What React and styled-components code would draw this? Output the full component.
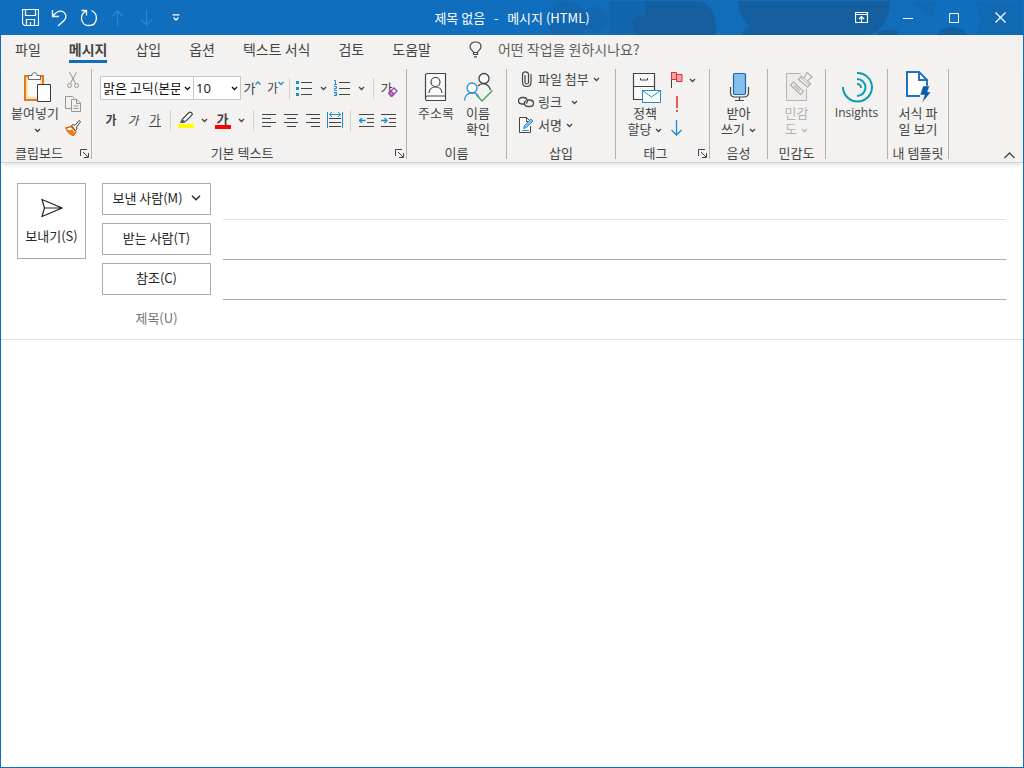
import React from 'react';
import styled, { createGlobalStyle, ThemeProvider } from 'styled-components';

const theme = {
  colors: {
    brand: '#106ebe',
    brandDark: '#155fa0',
    ribbon: '#f3f2f1',
    ink: '#3b3a39',
    text: '#444444',
    line: '#b3b0ad',
    softLine: '#e1e1e1',
    blue: '#1e8bcd',
    disabled: '#b5b3b1',
  },
  fonts: {
    ui: '"Open Sans", "Noto Sans CJK KR", sans-serif',
    korean: '"Noto Sans CJK KR", "Noto Sans", sans-serif',
  },
};

const GlobalStyle = createGlobalStyle`
  * {
    box-sizing: border-box;
  }

  html,
  body,
  #root {
    height: 100%;
    margin: 0;
  }

  button,
  input,
  select,
  textarea {
    margin: 0;
    padding: 0;
    border: 0;
    background: none;
    color: inherit;
    font: inherit;
  }

  svg {
    display: block;
    flex: none;
  }
`;

const Window = styled.div`
  display: flex;
  flex-direction: column;
  min-height: 100%;
  border: 1px solid ${props => props.theme.colors.brand};
  border-top: 0;
  background: #ffffff;
  color: ${props => props.theme.colors.text};
  font-family: ${props => props.theme.fonts.korean};
  font-size: 13px;
  line-height: 16px;
`;

/* Title bar */
const TitleBar = styled.header`
  position: relative;
  display: grid;
  grid-template-columns: 1fr auto 1fr;
  align-items: center;
  height: 35px;
  overflow: hidden;
  background: ${props => props.theme.colors.brand};
  color: #ffffff;
`;

const TitleArt = styled.svg`
  position: absolute;
  top: 0;
  right: 0;
`;

const QuickAccess = styled.div`
  display: flex;
  padding-left: 15px;
`;

const QuickButton = styled.button`
  display: flex;
  align-items: center;
  justify-content: center;
  width: 29px;
  height: 35px;
  color: ${props => (props.disabled ? '#2b88d8' : '#ffffff')};
`;

const Title = styled.h1`
  position: relative;
  margin: 0;
  font-size: 13px;
  font-weight: 400;
  white-space: pre;
`;

const WindowControls = styled.div`
  position: relative;
  display: flex;
  justify-content: flex-end;
`;

const WindowButton = styled.button`
  display: flex;
  align-items: center;
  justify-content: center;
  width: 46px;
  height: 35px;
`;

/* Tabs */
const Tabs = styled.nav`
  display: flex;
  gap: 28px;
  height: 31px;
  padding-left: 14px;
  background: ${props => props.theme.colors.ribbon};
  font-size: 14px;
`;

const Tab = styled.button`
  height: 28px;
  padding-top: 3px;
  border-bottom: 3px solid ${props => (props.$active ? props.theme.colors.brand : 'transparent')};
  font-weight: ${props => (props.$active ? 700 : 400)};
  line-height: 22px;
  white-space: nowrap;
`;

const TellMe = styled.label`
  display: flex;
  flex: 1;
  gap: 16px;
  align-items: center;
  height: 28px;
  padding-left: 10px;
`;

const TellMeInput = styled.input`
  flex: 1;
  min-width: 0;
  height: 28px;
  padding-bottom: 1px;

  &::placeholder {
    color: #605e5c;
    opacity: 1;
  }
`;

/* Ribbon */
const Ribbon = styled.section`
  position: relative;
  display: flex;
  padding: 3px 0;
  border-bottom: 1px solid #d2d0ce;
  background: ${props => props.theme.colors.ribbon};
  box-shadow: 0 4px 4px -2px rgba(0, 0, 0, 0.12);
`;

const GroupBox = styled.div`
  display: flex;
  flex: none;
  flex-direction: column;
  width: ${props => props.$width}px;
  height: 90px;
  border-right: 1px solid ${props => props.theme.colors.line};
`;

const GroupBody = styled.div`
  display: flex;
  flex: 1;
  justify-content: ${props => (props.$center ? 'center' : 'flex-start')};
  padding-left: ${props => props.$indent || 0}px;
`;

const GroupFooter = styled.div`
  display: flex;
  align-items: center;
  height: 14px;
  padding-top: 2px;
`;

const GroupName = styled.span`
  flex: 1;
  text-align: center;
  white-space: nowrap;
`;

const Launcher = styled.button`
  display: flex;
  width: 12px;
  margin-right: 2px;
  justify-content: flex-end;
`;

const BigButton = styled.button`
  display: flex;
  flex-direction: column;
  gap: 2px;
  align-items: center;
  width: ${props => props.$width || 42}px;
  height: 72px;
  padding-top: 2px;
  color: ${props => (props.disabled ? props.theme.colors.disabled : 'inherit')};
`;

const BigLabel = styled.span`
  font-family: ${props => (props.$latin ? props.theme.fonts.ui : 'inherit')};
  font-size: ${props => (props.$latin ? 12 : 13)}px;
  white-space: pre;

  svg {
    display: inline-block;
    margin-left: 4px;
    vertical-align: middle;
  }
`;

const IconStack = styled.div`
  display: grid;
  grid-auto-rows: 22px;
  gap: 2px;
  align-content: start;
  width: ${props => props.$width || 24}px;
  padding-left: ${props => props.$indent || 0}px;
`;

const IconButton = styled.button`
  display: flex;
  gap: ${props => props.$gap || 0}px;
  align-items: center;
  justify-content: ${props => (props.$start ? 'flex-start' : 'center')};
  width: ${props => (props.$width ? `${props.$width}px` : 'auto')};
  height: 22px;
`;

const TextRows = styled.div`
  display: flex;
  flex-direction: column;
  gap: 8px;
  padding-top: 7px;
`;

const TextRow = styled.div`
  display: flex;
  align-items: center;
  height: 24px;
`;

const Combo = styled.span`
  position: relative;
  display: flex;
  align-items: center;
  width: ${props => props.$width}px;
  height: 24px;
  border: 1px solid #c8c6c4;
  border-left-width: ${props => (props.$joined ? 0 : 1)}px;
  background: #ffffff;
  color: #111111;

  svg {
    position: absolute;
    right: 2px;
    pointer-events: none;
  }
`;

const ComboSelect = styled.select`
  width: 100%;
  height: 22px;
  padding: 0 13px 0 2px;
  appearance: none;
  font-family: ${props => (props.$latin ? props.theme.fonts.ui : 'inherit')};
`;

const Divider = styled.span`
  width: 1px;
  height: 21px;
  background: #d2d0ce;
`;

const Glyph = styled.span`
  font-size: 12px;
  font-weight: ${props => (props.$bold ? 700 : 400)};
  font-style: ${props => (props.$italic ? 'italic' : 'normal')};
  line-height: 13px;
  border-bottom: 1px solid ${props => (props.$underline ? 'currentColor' : 'transparent')};
`;

const FontColor = styled.span`
  width: 16px;
  border-bottom: 4px solid #ff0000;
  font-size: 13px;
  font-weight: 700;
  line-height: 13px;
  text-align: center;
`;

/* a small mark laid over the corner of a letter */
const Marked = styled.span`
  position: relative;
  width: 17px;
  text-align: left;

  svg {
    position: absolute;
    right: 0;
    bottom: -1px;
  }
`;

const CommandList = styled.div`
  display: grid;
  grid-auto-rows: 20px;
  gap: 3px;
  align-content: start;
`;

const Command = styled.button`
  display: flex;
  gap: 4px;
  align-items: center;
  white-space: nowrap;
`;

const CommandIcon = styled.span`
  display: flex;
  justify-content: center;
  width: 16px;
`;

const Spread = styled.span`
  display: flex;
  gap: ${props => props.$gap}px;
  align-items: center;
`;

const CollapseButton = styled.button`
  display: flex;
  align-self: flex-end;
  justify-content: center;
  width: 28px;
  height: 7px;
  margin-left: auto;
`;

/* Message header */
const Header = styled.form`
  display: flex;
  gap: 16px;
  align-items: flex-start;
  padding: 20px 17px 0 16px;
  border-bottom: 1px solid ${props => props.theme.colors.softLine};
  color: #262626;
`;

const SendButton = styled.button`
  display: flex;
  flex: none;
  flex-direction: column;
  gap: 10px;
  align-items: center;
  justify-content: center;
  width: 69px;
  height: 76px;
  border: 1px solid #ababab;
`;

const Fields = styled.div`
  display: flex;
  flex: 1;
  flex-direction: column;
  gap: 3px;
  min-width: 0;
`;

const Field = styled.div`
  display: flex;
  gap: 12px;
  align-items: flex-start;
`;

const FieldButton = styled.button`
  display: flex;
  flex: none;
  gap: 8px;
  align-items: center;
  justify-content: center;
  width: 109px;
  height: 32px;
  padding-bottom: 2px;
  border: 1px solid #ababab;
`;

const FieldLabel = styled.label`
  flex: none;
  width: 109px;
  color: #767676;
  line-height: 30px;
  text-align: center;
`;

const FieldInput = styled.input`
  flex: 1;
  min-width: 0;
  height: ${props => (props.$line ? 37 : 36)}px;
  border-bottom: ${props => (props.$line ? `1px solid ${props.$line}` : '0')};
  outline: 0;
`;

const MessageBody = styled.textarea`
  flex: 1;
  width: 100%;
  padding: 12px 16px;
  outline: 0;
  resize: none;
`;

/* Icons */
const Icon = ({ w = 16, h = 16, children, ...rest }) => (
  <svg width={w} height={h} viewBox={`0 0 ${w} ${h}`} fill="none" stroke="currentColor" aria-hidden="true" {...rest}>
    {children}
  </svg>
);

const Chevron = () => (
  <Icon w={7} h={5} strokeWidth="1.3">
    <path d="M1 1l2.5 2.5L6 1" />
  </Icon>
);

const LauncherIcon = () => (
  <Icon w={9} h={9}>
    <path d="M0.5 7V0.5H7M3 3l5 5M8.5 4v4.5H4" />
  </Icon>
);

const PasteIcon = () => (
  <Icon w={32} h={32}>
    <path d="M6 5h18v24H6z" fill="#fde3a7" stroke="#e07b1a" strokeWidth="2" />
    <path d="M9 8h12v18H9z" fill="#fafafa" stroke="none" />
    <path d="M9.500 8.500v-4h3.500c0-4 5-4 5 0h3.500v4z" fill="#fafafa" stroke="#6b6967" />
    <path d="M18.500 13.500h13v17h-13z" fill="#fff" stroke="#3b3a39" />
  </Icon>
);

const CutIcon = () => (
  <Icon w={16} h={18} stroke="#979593">
    <path d="M4.500 1l6 11.500M11.500 1l-6 11.500" />
    <circle cx="4.500" cy="14.500" r="2" />
    <circle cx="11.500" cy="14.500" r="2" />
  </Icon>
);

const CopyIcon = () => (
  <Icon w={16} h={16} stroke="#979593">
    <path d="M6 12.500H0.500v-12h7l2 2" />
    <path d="M6.500 3.500h5.500l3.500 3.500v8.500h-9zM11.500 3.500V7.500h4M8.500 10h5M8.500 12.500h5" />
  </Icon>
);

const BrushIcon = () => (
  <Icon>
    <path d="M1 8l5-1.500 5 5L8.500 15.500C5 14.500 2.500 12 1 8z" fill="#fff" stroke="#d9660a" strokeWidth="1.4" />
    <path d="M2 10.500l5.500-1 2 3-1.500 3C5.500 14.500 3 13 2 10.500z" fill="#ef7c16" stroke="none" />
    <path d="M6.500 5.500l1.500-1 2 1 3.500-4.500c1-1 2.500.5 1.500 1.500L11.500 7l.5 2-1.500 1.500z" fill="#fff" />
  </Icon>
);

const GrowFontIcon = () => (
  <Icon w={6} h={15} stroke="#1e8bcd" strokeWidth="1.300">
    <path d="M0.500 3.500L3 1l2.500 2.500" />
  </Icon>
);

const ShrinkFontIcon = () => (
  <Icon w={6} h={15} stroke="#1e8bcd" strokeWidth="1.300">
    <path d="M0.500 1L3 3.500 5.500 1" />
  </Icon>
);

const BulletsIcon = () => (
  <Icon>
    <path d="M5 2.500h11M5 8.500h11M5 14.500h11" />
    <path d="M0 1h3v3H0zM0 7h3v3H0zM0 13h3v3H0z" fill="#1e8bcd" stroke="none" />
  </Icon>
);

const NumberingIcon = () => (
  <Icon>
    <path d="M5 2.500h11M5 8.500h11M5 14.500h11" />
    <path
      d="M0 .5h1.500V4M0 4.500h3M0 6.500h2.500V8.500H.5V10.500H3M0 12.500h2.500v3H0M.5 14h2"
      stroke="#1e8bcd"
    />
  </Icon>
);

const EraserIcon = () => (
  <Icon w={10} h={10} stroke="#9b3fa5" strokeWidth="1.300">
    <path d="M1 6l5-5 3 3-5 5H3z" fill="#fff" />
    <path d="M1 6l2-2 3 3-2 2H3z" fill="#c78fce" />
  </Icon>
);

const HighlightIcon = () => (
  <Icon w={16} h={18}>
    <path d="M3 11l1.500-3L11 1.500c1.500-1 4 .8 3 2.500L8 10l-3 .5z" fill="#fff" strokeWidth="1.200" />
    <path d="M2 12l2.500-4 3 3-1.500 1z" fill="#605e5c" stroke="none" />
    <path d="M0 13h16v4H0z" fill="#ffff00" stroke="none" />
  </Icon>
);

const alignments = {
  left: 'M0 1.500h14M0 5.500h9M0 9.500h14M0 13.500h9',
  center: 'M0 1.500h14M3 5.500h9M0 9.500h14M3 13.500h9',
  right: 'M0 1.500h14M5 5.500h9M0 9.500h14M5 13.500h9',
};

const AlignIcon = ({ side }) => (
  <Icon w={14} h={14}>
    <path d={alignments[side]} />
  </Icon>
);

const DistributeIcon = () => (
  <Icon w={16} h={16}>
    <path d="M2 6.500h12M2 10.500h12M2 14.500h12" />
    <path d="M0.500 0v16M15.500 0v16M2.500 2.500h11M5 0L2.500 2.500 5 5M11 0l2.500 2.500L11 5" stroke="#1e8bcd" />
  </Icon>
);

const IndentIcon = ({ more }) => (
  <Icon w={15} h={14}>
    <path d="M0 1.500h15M8 5.500h7M8 9.500h7M0 13.500h15" />
    <path
      d={more ? 'M0 7.500h6M3.500 5L6 7.500 3.500 10' : 'M0.500 7.500h6M3 5L0.500 7.500 3 10'}
      stroke="#1e8bcd"
      strokeWidth="1.300"
    />
  </Icon>
);

const AddressBookIcon = () => (
  <Icon w={32} h={32} strokeWidth="1.200">
    <path d="M5.500 26V4.500c0-1 .5-2 2-2h18v27h-18c-3 0-2.500-4.500 0-4.500h18" fill="#fafafa" />
    <circle cx="15.500" cy="11" r="4.500" />
    <path d="M9 22c.5-8 12.500-8 13 0" />
  </Icon>
);

const CheckNamesIcon = () => (
  <Icon w={32} h={32} strokeWidth="1.300">
    <circle cx="22" cy="7.500" r="5" fill="#fafafa" />
    <path d="M16 15c3.500-4 10.500-3 12.500 4" />
    <circle cx="10" cy="17" r="5" fill="#fafafa" stroke="#2b8fd9" />
    <path d="M2.500 29.500c1-10 12-9.500 14.500-3" stroke="#2b8fd9" />
    <path d="M14.500 24l5.500 6 10.500-10.500" stroke="#42a862" strokeWidth="1.500" />
  </Icon>
);

const AttachIcon = () => (
  <Icon w={12} h={16} strokeWidth="1.200">
    <path d="M5 4v7.500c0 2 3.500 2 3.500 0V3.500c0-3.500-6-3.500-6 0V11c0 6 8.500 6 8.500 0V3" />
  </Icon>
);

const LinkIcon = () => (
  <Icon w={16} h={12} strokeWidth="1.300">
    <path d="M6 8H4.500C-.8 8-.8 1.500 4.500 1.500h1c4 0 5 4.500 2.500 6" />
    <path d="M10 4h1.500c5.300 0 5.300 6.500 0 6.500h-1.500C6 10.500 5.500 6 8 4.500" />
  </Icon>
);

const SignatureIcon = () => (
  <Icon w={14} h={16}>
    <path d="M11.500 9v6.500H.5V.5h7l4 4" fill="#fff" />
    <path d="M7.500 .5v4h3" />
    <path d="M3 13.500h7" stroke="#1e8bcd" />
    <path d="M4.500 11.500l1-3L12 2l2 2-6.500 6.500z" fill="#8cc3ee" stroke="#1e8bcd" />
  </Icon>
);

const PolicyIcon = () => (
  <Icon w={32} h={32}>
    <path d="M4.500 2.500h21v26h-21zM4.500 15.500h21" fill="#fafafa" strokeWidth="1.200" />
    <path d="M11.500 7v2h7V7" />
    <path d="M13.500 19.500h18v12h-18z" fill="#fff" stroke="#1e8bcd" />
    <path d="M13.500 19.500l9 6.500 9-6.500" stroke="#1e8bcd" />
  </Icon>
);

const FlagIcon = () => (
  <Icon w={12} h={16}>
    <path d="M0.500 0v16" />
    <path d="M0.500 .5h5v2h5.500v7H5.500v-2h-5z" fill="#ff9ca0" stroke="#d13438" />
    <path d="M5.500 2v6" stroke="#d13438" />
  </Icon>
);

const ImportantIcon = () => (
  <Icon w={12} h={16} stroke="#e8585b" strokeWidth="2">
    <path d="M6 0v12M6 14v2" />
  </Icon>
);

const LowIcon = () => (
  <Icon w={12} h={16} stroke="#1e8bcd" strokeWidth="1.300">
    <path d="M5.500 0v15M0.500 10l5 5 5-5" />
  </Icon>
);

const MicIcon = () => (
  <Icon w={32} h={32}>
    <rect x="10.500" y="2.500" width="12" height="21" rx="1.500" fill="#83beec" stroke="#1566b0" strokeWidth="1.200" />
    <path d="M7.500 16v5.500c0 3 2 4.500 4.500 4.500h9c3 0 4.500-1.500 4.500-4.500V16M16.500 26v3.500M12 29.500h9" strokeWidth="1.200" />
  </Icon>
);

const SensitivityIcon = () => (
  <Icon w={32} h={32}>
    <path d="M20 2.500H5.500v27h20V18" fill="#eeedec" />
    <path d="M9.500 14l3-3 10 9.500-3 3zM13 14.500l6 5.500" fill="#f3f2f1" strokeWidth="1.300" />
    <path d="M17.500 8.500l3-3 2.500 1.500 3-5.500 5 4.500-4.500 4 3 3-3 3z" fill="#f3f2f1" strokeWidth="1.400" />
    <path d="M19.500 6.500l9 8M23 7l3.500 3" />
  </Icon>
);

const InsightsIcon = () => (
  <Icon w={32} h={32} stroke="#0a9db1" strokeWidth="2">
    <path d="M2 16a14.500 14.500 0 0 0 29 0A14.500 14.500 0 0 0 16 2" />
    <path d="M16 8a8.500 8.500 0 0 1 0 17" />
    <path d="M16 13a4 4 0 0 1 4 4" />
  </Icon>
);

const TemplateIcon = () => (
  <Icon w={32} h={32} stroke="#1f72bf" strokeWidth="2">
    <path d="M18 25H5V1h12l8 8v6" fill="#fff" />
    <path d="M17 1v8h8" />
    <path d="M21 15h6.500l-2 6H29l-9 11 2.500-8H18z" fill="#0b5aa6" stroke="#f3f2f1" strokeWidth="0.500" />
  </Icon>
);

const SendIcon = () => (
  <Icon w={22} h={20} strokeWidth="1.200">
    <path d="M1 1.500l20 8.500L1 18.500l2.500-8.500zM3.500 10H20" />
  </Icon>
);

const BulbIcon = () => (
  <Icon w={13} h={17} strokeWidth="1.200">
    <path d="M4.500 13.500v-2C4.500 9.500 1 9 1 5.800 1 2.700 3.500 1 6.500 1S12 2.700 12 5.800c0 3.200-3.500 3.700-3.500 5.700v2zM4.500 11.500h4M5 15.900h3" />
  </Icon>
);

const quickActions = [
  {
    name: '저장',
    icon: <Icon w={17} h={17}><path d="M.5 .5h16v16h-14l-2-2zM3.500 .5v6h10v-6M4.500 16v-5.500h8V16M8.500 13v3" strokeWidth="1.200" /></Icon>,
  },
  {
    name: '실행 취소',
    icon: <Icon w={17} h={18}><path d="M1.500 1v6.500H8M1.500 7.500C5 3 9 .8 12.500 3c3 2 3 5.500 1 8L7 17" strokeWidth="1.300" /></Icon>,
  },
  {
    name: '다시 실행',
    icon: <Icon w={18} h={18}><path d="M1.500 1.500H6.500V6.500M6 2C-1 6 .5 16.500 9 16.500S19 5 11.500 1.500" strokeWidth="1.300" /></Icon>,
  },
  {
    name: '이전 항목',
    disabled: true,
    icon: <Icon w={13} h={16}><path d="M6.500 16V1M1 6.500L6.500 1 12 6.500" strokeWidth="1.200" /></Icon>,
  },
  {
    name: '다음 항목',
    disabled: true,
    icon: <Icon w={13} h={16}><path d="M6.500 0v15M1 9.500L6.500 15 12 9.500" strokeWidth="1.200" /></Icon>,
  },
  {
    name: '빠른 실행 도구 모음 사용자 지정',
    icon: <Icon w={8} h={7}><path d="M.5 .8h7M1.500 3.500L4 6l2.500-2.500" strokeWidth="1.300" /></Icon>,
  },
];

const windowActions = [
  {
    name: '리본 메뉴 표시 옵션',
    icon: <Icon w={14} h={11} strokeWidth="1.200"><path d="M.5 .5h12v10H.5zM.5 2.500h12M6.500 10V4.500M4 7l2.500-2.500L9 7" /></Icon>,
  },
  { name: '최소화', icon: <Icon w={10} h={10}><path d="M0 5.500h10" /></Icon> },
  { name: '최대화', icon: <Icon w={10} h={10}><path d="M.5 .5h9v9h-9z" /></Icon> },
  { name: '닫기', icon: <Icon w={11} h={11}><path d="M.5 .5l10 10M10.500 .5l-10 10" strokeWidth="1.200" /></Icon> },
];

const tabs = ['파일', '메시지', '삽입', '옵션', '텍스트 서식', '검토', '도움말'];

/**
 * COMPONENTS
 */
const Group = ({ name, width, indent, center, launcher, children }) => (
  <GroupBox $width={width} role="group" aria-label={name}>
    <GroupBody $indent={indent} $center={center}>{children}</GroupBody>
    <GroupFooter>
      <GroupName>{name}</GroupName>
      {launcher && <Launcher type="button" aria-label={`${name} 설정`}><LauncherIcon /></Launcher>}
    </GroupFooter>
  </GroupBox>
);

const LargeCommand = ({ icon, label, dropdown, width, disabled, latin }) => (
  <BigButton type="button" $width={width} disabled={disabled}>
    {icon}
    <BigLabel $latin={latin}>
      {label}
      {dropdown && <Chevron />}
    </BigLabel>
  </BigButton>
);

const Drop = ({ label, width = 16 }) => (
  <IconButton type="button" $width={width} aria-label={label}><Chevron /></IconButton>
);

const BasicText = () => (
  <Group name="기본 텍스트" width={315} indent={8} launcher>
    <TextRows>
      <TextRow>
        <Combo $width={94}>
          <ComboSelect aria-label="글꼴">
            <option>맑은 고딕(본문 한글)</option>
          </ComboSelect>
          <Chevron />
        </Combo>
        <Combo $width={47} $joined>
          <ComboSelect aria-label="글꼴 크기" $latin>
            <option>10</option>
          </ComboSelect>
          <Chevron />
        </Combo>
        <IconButton type="button" $width={23} aria-label="글꼴 크기 크게">가<GrowFontIcon /></IconButton>
        <IconButton type="button" $width={23} aria-label="글꼴 크기 작게"><Glyph>가</Glyph><ShrinkFontIcon /></IconButton>
        <IconButton as="span" $width={4}><Divider /></IconButton>
        <IconButton type="button" $width={26} aria-label="글머리 기호"><BulletsIcon /></IconButton>
        <Drop label="글머리 기호 옵션" width={12} />
        <IconButton type="button" $width={26} aria-label="번호 매기기"><NumberingIcon /></IconButton>
        <Drop label="번호 매기기 옵션" width={12} />
        <IconButton as="span" $width={12}><Divider /></IconButton>
        <IconButton type="button" $width={20} aria-label="서식 지우기"><Marked>가<EraserIcon /></Marked></IconButton>
      </TextRow>
      <TextRow>
        <IconButton type="button" $width={22} aria-label="굵게"><Glyph $bold>가</Glyph></IconButton>
        <IconButton type="button" $width={22} aria-label="기울임꼴"><Glyph $italic>가</Glyph></IconButton>
        <IconButton type="button" $width={22} aria-label="밑줄"><Glyph $underline>가</Glyph></IconButton>
        <IconButton as="span" $width={9}><Divider /></IconButton>
        <IconButton type="button" $width={21} aria-label="텍스트 강조 색"><HighlightIcon /></IconButton>
        <Drop label="강조 색 옵션" />
        <IconButton type="button" $width={21} aria-label="글꼴 색"><FontColor>가</FontColor></IconButton>
        <Drop label="글꼴 색 옵션" />
        <IconButton as="span" $width={9}><Divider /></IconButton>
        <IconButton type="button" $width={22} aria-label="왼쪽 맞춤"><AlignIcon side="left" /></IconButton>
        <IconButton type="button" $width={22} aria-label="가운데 맞춤"><AlignIcon side="center" /></IconButton>
        <IconButton type="button" $width={22} aria-label="오른쪽 맞춤"><AlignIcon side="right" /></IconButton>
        <IconButton type="button" $width={22} aria-label="균등 분할"><DistributeIcon /></IconButton>
        <IconButton as="span" $width={9}><Divider /></IconButton>
        <IconButton type="button" $width={22} aria-label="내어쓰기"><IndentIcon /></IconButton>
        <IconButton type="button" $width={22} aria-label="들여쓰기"><IndentIcon more /></IconButton>
      </TextRow>
    </TextRows>
  </Group>
);

const MessageRibbon = () => (
  <Ribbon>
    <Group name="클립보드" width={91} indent={9} launcher>
      <LargeCommand icon={<PasteIcon />} label={'붙여넣기\n'} dropdown width={50} />
      <IconStack $width={26}>
        <IconButton type="button" aria-label="잘라내기"><CutIcon /></IconButton>
        <IconButton type="button" aria-label="복사"><CopyIcon /></IconButton>
        <IconButton type="button" aria-label="서식 복사"><BrushIcon /></IconButton>
      </IconStack>
    </Group>
    <BasicText />
    <Group name="이름" width={100} indent={8}>
      <LargeCommand icon={<AddressBookIcon />} label="주소록" />
      <LargeCommand icon={<CheckNamesIcon />} label={'이름\n확인'} />
    </Group>
    <Group name="삽입" width={109} indent={11}>
      <CommandList>
        <Command type="button"><CommandIcon><AttachIcon /></CommandIcon>파일 첨부<Chevron /></Command>
        <Command type="button"><CommandIcon><LinkIcon /></CommandIcon><Spread $gap={9}>링크<Chevron /></Spread></Command>
        <Command type="button"><CommandIcon><SignatureIcon /></CommandIcon>서명<Chevron /></Command>
      </CommandList>
    </Group>
    <Group name="태그" width={94} indent={8} launcher>
      <LargeCommand icon={<PolicyIcon />} label={'정책\n할당'} dropdown />
      <IconStack $width={34} $indent={5}>
        <IconButton type="button" $start $gap={6} aria-label="추가 작업"><FlagIcon /><Chevron /></IconButton>
        <IconButton type="button" $start aria-label="높은 중요도"><ImportantIcon /></IconButton>
        <IconButton type="button" $start aria-label="낮은 중요도"><LowIcon /></IconButton>
      </IconStack>
    </Group>
    <Group name="음성" width={58} center>
      <LargeCommand icon={<MicIcon />} label={'받아\n쓰기'} dropdown />
    </Group>
    <Group name="민감도" width={58} center>
      <LargeCommand icon={<SensitivityIcon />} label={'민감\n도'} dropdown disabled />
    </Group>
    <Group width={62} center>
      <LargeCommand icon={<InsightsIcon />} label="Insights" width={56} latin />
    </Group>
    <Group name="내 템플릿" width={61} center>
      <LargeCommand icon={<TemplateIcon />} label={'서식 파\n일 보기'} width={56} />
    </Group>
    <CollapseButton type="button" aria-label="리본 메뉴 축소">
      <Icon w={11} h={7} strokeWidth="1.300"><path d="M.5 6l5-5 5 5" /></Icon>
    </CollapseButton>
  </Ribbon>
);

const App = () => (
  <ThemeProvider theme={theme}>
    <GlobalStyle />
    <Window>
      <TitleBar>
        <TitleArt width="480" height="35" viewBox="0 0 480 35" fill={theme.colors.brandDark} aria-hidden="true">
          <path d="M0 1h480v34H0z" opacity="0.120" />
          <circle cx="24" cy="21" r="20" opacity="0.350" />
          <circle cx="52" cy="20" r="13" opacity="0.350" />
          <path d="M66 1h80v34H66z" opacity="0.450" />
          <path d="M89 22c0-5 7-7 13-7V1h55c14 5 17 18 16 34H92z" />
          <path d="M195 1h152c0 18-9 32-24 34H198c3-6 5-7 9-9-7-5-12-14-12-25z" />
          <path d="M332 35c6-6 17-6 23-4v4z" />
          <path d="M368 1h112v34h-70z" opacity="0.250" />
          <circle cx="413" cy="18" r="24" fill={theme.colors.brand} />
          <path d="M395 35c3-11 24-11 29 0z" />
        </TitleArt>
        <QuickAccess>
          {quickActions.map(({ name, icon, disabled }) => (
            <QuickButton key={name} type="button" aria-label={name} disabled={disabled}>{icon}</QuickButton>
          ))}
        </QuickAccess>
        <Title>{'제목 없음   -   메시지 (HTML)'}</Title>
        <WindowControls>
          {windowActions.map(({ name, icon }) => (
            <WindowButton key={name} type="button" aria-label={name}>{icon}</WindowButton>
          ))}
        </WindowControls>
      </TitleBar>
      <Tabs>
        {tabs.map(tab => (
          <Tab key={tab} type="button" $active={tab === '메시지'}>{tab}</Tab>
        ))}
        <TellMe>
          <BulbIcon />
          <TellMeInput aria-label="작업 검색" placeholder="어떤 작업을 원하시나요?" />
        </TellMe>
      </Tabs>
      <MessageRibbon />
      <Header>
        <SendButton type="button"><SendIcon />보내기(S)</SendButton>
        <Fields>
          <Field>
            <FieldButton type="button">
              보낸 사람(M)
              <Icon w={10} h={6} strokeWidth="1.500"><path d="M1 .8l4 4 4-4" /></Icon>
            </FieldButton>
            <FieldInput aria-label="보낸 사람" $line="#e1e1e1" />
          </Field>
          <Field>
            <FieldButton type="button">받는 사람(T)</FieldButton>
            <FieldInput aria-label="받는 사람" $line="#ababab" />
          </Field>
          <Field>
            <FieldButton type="button">참조(C)</FieldButton>
            <FieldInput aria-label="참조" $line="#ababab" />
          </Field>
          <Field>
            <FieldLabel htmlFor="subject">제목(U)</FieldLabel>
            <FieldInput id="subject" />
          </Field>
        </Fields>
      </Header>
      <MessageBody aria-label="메시지 본문" />
    </Window>
  </ThemeProvider>
);

export default App;
